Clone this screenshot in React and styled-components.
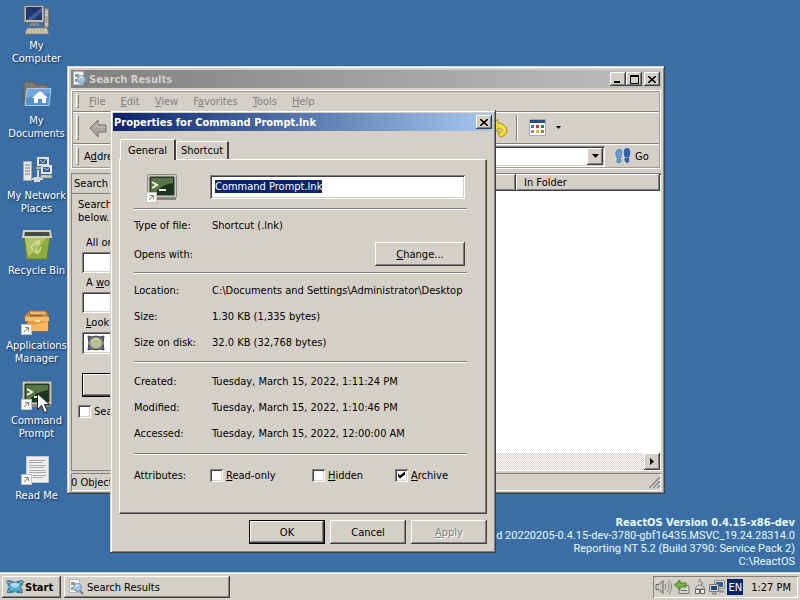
import React, { useEffect, useRef } from "react";
import styled, { createGlobalStyle, css } from "styled-components";

const face = "#d4d0c8";
const raised = css`
  box-shadow: inset -1px -1px #404040, inset 1px 1px #fff, inset -2px -2px #808080;
`;
const sunken = css`
  box-shadow: inset 1px 1px #808080, inset -1px -1px #fff, inset 2px 2px #404040, inset -2px -2px ${face};
`;

const GlobalStyle = createGlobalStyle`
  * { box-sizing: border-box; }
  body { margin: 0; overflow: hidden; }
  body, button, input {
    font-family: "DejaVu Sans Condensed", "DejaVu Sans", sans-serif;
    font-size: 11px;
    line-height: 13px;
    color: #000;
  }
  button, input { margin: 0; padding: 0; border: 0; border-radius: 0; outline: 0; }
  svg { display: block; flex: none; }
`;

const Page = styled.div`
  min-height: 100vh;
  display: flex;
  flex-direction: column;
  background: #3a6ea5;
`;
const Desktop = styled.main`
  position: relative;
  flex: 1;
  overflow: hidden;
`;
const Shortcuts = styled.nav`
  display: grid;
  grid-auto-rows: 75px;
  width: 73px;
  padding-top: 4px;
`;
const ShortcutLink = styled.a`
  display: flex;
  flex-direction: column;
  align-items: center;
  gap: 3px;
  color: #fff;
  text-align: center;
  text-decoration: none;
  text-shadow: 1px 1px 2px #102848;
`;
const ShortcutText = styled.span`
  white-space: pre;
`;
const Version = styled.div`
  position: absolute;
  right: 5px;
  bottom: 4px;
  color: #e8fbff;
  font-family: Roboto, "DejaVu Sans Condensed", sans-serif;
  text-align: right;
  white-space: nowrap;
`;
const VersionLine = styled.div``;
const VersionTitle = styled.strong`
  display: block;
  font-family: "DejaVu Sans Condensed", "DejaVu Sans", sans-serif;
`;

const WindowFrame = styled.section`
  position: absolute;
  display: flex;
  flex-direction: column;
  background: ${face};
  padding: 3px;
  box-shadow: inset -1px -1px #404040, inset 1px 1px ${face}, inset 2px 2px #fff, inset -2px -2px #808080;
`;
const SearchFrame = styled(WindowFrame)`
  left: 67px;
  right: 135px;
  top: 66px;
  bottom: 78px;
  padding: 4px 4px 3px;
`;
const DialogFrame = styled(WindowFrame)`
  left: 110px;
  top: 110px;
  width: 386px;
`;
const TitleBar = styled.header`
  flex: none;
  display: flex;
  align-items: center;
  height: 18px;
  padding: 0 1px;
  gap: 1px;
  color: ${(p) => (p.$active ? "#fff" : face)};
  background: ${(p) =>
    p.$active
      ? "linear-gradient(90deg, #0a246a, #a6caf0)"
      : "linear-gradient(90deg, #808080, #c0c0c0)"};
`;
const TitleText = styled.h1`
  flex: 1;
  margin: 0;
  font-size: 11px;
  line-height: 13px;
  white-space: nowrap;
`;
const CaptionButtons = styled.div`
  display: flex;
`;
const CaptionButton = styled.button`
  display: grid;
  place-items: center;
  width: 16px;
  height: 14px;
  margin-left: ${(p) => (p.$apart ? 2 : 0)}px;
  background: ${face};
  ${raised}
`;

const Rebar = styled.div`
  flex: none;
  margin-top: 2px;
  border: 1px solid #fff;
  outline: 1px solid #a09c94;
  outline-offset: -2px;
`;
const Band = styled.div`
  display: flex;
  align-items: center;
  height: ${(p) => p.$height}px;
  padding-left: 4px;
  border-bottom: 1px solid #808080;
  box-shadow: inset 0 1px #fff;
  &:last-child { border-bottom: 0; }
`;
const Grip = styled.span`
  flex: none;
  align-self: stretch;
  width: 3px;
  margin: 3px 0;
  border: 1px solid;
  border-color: #fff #808080 #808080 #fff;
`;
const MenuItem = styled.button`
  height: 16px;
  margin-left: ${(p) => (p.$first ? 10 : 15)}px;
  background: none;
  color: #808080;
`;
const ToolButton = styled.button`
  display: flex;
  align-items: center;
  background: none;
  gap: 10px;
`;
const BackGroup = styled.div`
  flex: none;
  width: 411px;
  padding-left: 9px;
`;
const ToolDivider = styled.span`
  width: 2px;
  height: 26px;
  margin: 0 11px 0 8px;
  border-left: 1px solid #808080;
  border-right: 1px solid #fff;
`;
const AddressLabel = styled.label`
  width: 64px;
  padding-left: 5px;
`;
const AddressBox = styled.div`
  flex: 1;
  display: flex;
  height: 21px;
  padding: 2px;
  background: #fff;
  ${sunken}
`;
const AddressInput = styled.input`
  flex: 1;
  min-width: 0;
  background: #fff;
`;
const ArrowButton = styled.button`
  display: grid;
  place-items: center;
  width: 16px;
  height: 17px;
  background: ${face};
  ${raised}
`;
const GoButton = styled.button`
  display: flex;
  align-items: center;
  gap: 4px;
  width: 55px;
  padding-left: 10px;
  background: none;
`;

const Panes = styled.div`
  flex: 1;
  display: flex;
  min-height: 0;
  margin-top: 4px;
`;
const SearchPane = styled.aside`
  width: 200px;
  border-top: 1px solid #808080;
  border-left: 1px solid #808080;
  border-bottom: 1px solid #808080;
`;
const PaneTitle = styled.h2`
  margin: 0;
  padding: 3px 2px;
  font-size: 11px;
  font-weight: normal;
  line-height: 13px;
  border-bottom: 1px solid #808080;
`;
const PaneForm = styled.form`
  padding: 4px 10px 0 6px;
`;
const PaneHint = styled.p`
  margin: 0 0 12px;
`;
const Field = styled.label`
  display: block;
  padding-left: 4px;
  margin-bottom: 3px;
`;
const FieldText = styled.span`
  display: block;
  padding-left: 4px;
  margin-bottom: 3px;
`;
const FieldInput = styled.input`
  width: 160px;
  height: 21px;
  background: #fff;
  ${sunken}
`;
const PlaceButton = styled.button`
  display: flex;
  align-items: center;
  width: 160px;
  height: 22px;
  padding-left: 5px;
  background: #fff;
  ${sunken}
`;
const PushButton = styled.button`
  width: ${(p) => p.$width || 76}px;
  height: 24px;
  background: ${face};
  ${raised}
  ${(p) =>
    p.$main &&
    css`
      border: 1px solid #000;
    `}
  &:disabled {
    color: #808080;
    text-shadow: 1px 1px #fff;
  }
`;
const SearchAction = styled.div`
  padding: 16px 0 6px 4px;
`;

const CheckLabel = styled.label`
  display: flex;
  align-items: center;
  gap: 3px;
  white-space: nowrap;
`;
const CheckBox = styled.input.attrs({ type: "checkbox" })`
  appearance: none;
  width: 13px;
  height: 13px;
  background: #fff;
  ${sunken}
  &:checked::after {
    content: "";
    display: block;
    width: 7px;
    height: 7px;
    margin: 3px;
    background: #000;
    clip-path: polygon(0 29%, 29% 57%, 100% 0, 100% 43%, 29% 100%, 0 72%);
  }
`;

const ListPane = styled.div`
  flex: 1;
  display: flex;
  flex-direction: column;
  margin-left: 4px;
  padding: 1px;
  background: #fff;
  box-shadow: inset 0 1px #808080, inset 0 2px #404040;
`;
const ListTable = styled.table`
  width: 100%;
  table-layout: fixed;
  border-collapse: collapse;
`;
const ListHead = styled.th`
  width: ${(p) => p.$width || "auto"};
  height: 17px;
  padding: 0 8px;
  font-weight: normal;
  text-align: left;
  background: ${face};
  box-shadow: inset -1px -1px #404040, inset 1px 1px #fff, inset -2px -2px #808080;
`;
const Scroll = styled.div`
  display: flex;
  justify-content: flex-end;
  margin-top: auto;
  background: repeating-conic-gradient(#fff 0 25%, ${face} 0 50%) 0 0 / 2px 2px;
`;
const StatusBar = styled.footer`
  flex: none;
  display: flex;
  align-items: center;
  justify-content: space-between;
  height: 18px;
  margin-top: 2px;
  box-shadow: inset 1px 1px #808080, inset -1px -1px #fff;
`;

const DialogBody = styled.div`
  padding: 8px 6px 6px;
`;
const TabList = styled.div`
  display: flex;
  align-items: flex-end;
  padding-left: 1px;
`;
const Tab = styled.button`
  position: relative;
  height: ${(p) => (p.$on ? 21 : 18)}px;
  width: ${(p) => (p.$on ? 56 : 53)}px;
  margin-bottom: ${(p) => (p.$on ? -1 : 0)}px;
  z-index: ${(p) => (p.$on ? 1 : 0)};
  background: ${face};
  border: 1px solid #fff;
  border-right: 2px solid #404040;
  border-bottom: 0;
  border-radius: 2px 2px 0 0;
`;
const TabPanel = styled.div`
  padding: 0 19px 25px 14px;
  border: 1px solid;
  border-color: #fff #404040 #404040 #fff;
  box-shadow: inset -1px -1px #808080;
`;
const NameRow = styled.div`
  display: flex;
  align-items: center;
  height: 48px;
  padding: 8px 2px 0 12px;
  gap: 32px;
`;
const NameInput = styled.input`
  flex: 1;
  height: 24px;
  margin-bottom: 2px;
  padding: 2px 5px 4px;
  background: #fff;
  ${sunken}
  &::selection { background: #0a246a; color: #fff; }
`;
const Group = styled.div`
  padding: ${(p) => p.$top}px 0 ${(p) => p.$bottom}px;
  border-top: 1px solid #808080;
  box-shadow: inset 0 1px #fff;
`;
const Row = styled.div`
  display: flex;
  align-items: center;
  height: ${(p) => p.$height || 26}px;
  padding-right: 2px;
`;
const RowLabel = styled.span`
  flex: none;
  width: ${(p) => (p.$narrow ? 76 : 78)}px;
`;
const RowValue = styled.span`
  flex: 1;
  white-space: nowrap;
`;
const Attribute = styled.div`
  width: ${(p) => p.$width}px;
`;
const DialogButtons = styled.div`
  display: flex;
  justify-content: flex-end;
  gap: 5px;
  padding-top: 6px;
`;

const TaskBar = styled.footer`
  flex: none;
  display: flex;
  align-items: center;
  gap: 3px;
  height: 28px;
  padding: 2px 2px 0;
  background: ${face};
  box-shadow: inset 0 1px ${face}, inset 0 2px #fff;
`;
const StartButton = styled.button`
  display: flex;
  align-items: center;
  width: 59px;
  height: 22px;
  padding-left: 3px;
  font-weight: bold;
  background: ${face};
  ${raised}
`;
const TaskButton = styled.button`
  display: flex;
  align-items: center;
  gap: 3px;
  width: 166px;
  height: 22px;
  padding-left: 4px;
  background: ${face};
  ${raised}
`;
const Tray = styled.div`
  display: flex;
  align-items: center;
  gap: 2px;
  height: 22px;
  margin-left: auto;
  padding: 0 7px 0 2px;
  box-shadow: inset 1px 1px #808080, inset -1px -1px #fff;
`;
const Language = styled.span`
  padding: 2px 1px 1px;
  color: #fff;
  background: #0a246a;
`;
const Clock = styled.time`
  padding-left: 6px;
  white-space: nowrap;
`;
const Pointer = styled.svg`
  position: absolute;
  left: 37px;
  top: 393px;
`;

const LinkBadge = () => (
  <g>
    <rect x="0.500" y="20.500" width="10" height="10" fill="#f6f6f4" stroke="#c4c4bc" />
    <path d="M3 28 7 24M4 23.500H7.500V27" fill="none" stroke="#84847c" />
  </g>
);
const ComputerIcon = () => (
  <svg width="32" height="32" viewBox="0 0 32 32">
    <path d="M23 4h5v20h-5z" fill="#aaa9a4" stroke="#535b5d" />
    <path d="M24 8h3M24 11h3M24 20h3" stroke="#e7e3db" />
    <rect x="3" y="1.500" width="20" height="17" rx="1" fill="#bebdb8" stroke="#656b6e" />
    <rect x="5" y="3" width="16" height="13" fill="#1f356c" />
    <path d="M5 16 21 3v5L12 16z" fill="#405a91" />
    <path d="M10 19h7l2 3H8z" fill="#86898a" />
    <path d="M6 24h20l2 6H4z" fill="#e4d6bf" stroke="#77736c" />
    <path d="M7 26h18M6 28h20" stroke="#928977" strokeDasharray="2 1" />
  </svg>
);
const DocumentsIcon = () => (
  <svg width="32" height="32" viewBox="0 0 32 32">
    <path d="M3 26V5q0-2 2-2h8l2 3h12v18z" fill="#837a70" stroke="#625b54" />
    <path d="M6 9.500h24l-2 17H4z" fill="#74a6de" stroke="#a3caf2" />
    <path d="M5 19 29 14l-2 12H5z" fill="#5590d2" />
    <path d="m19 12-8 7h2v5h4v-4h4v4h4v-5h2z" fill="#fff" />
  </svg>
);
const NetworkIcon = () => (
  <svg width="32" height="32" viewBox="0 0 32 32">
    <rect x="2.500" y="7.500" width="8" height="19" fill="#e7e7e5" stroke="#a4a7a7" />
    <path d="M4 11h5M4 14h5M4 17h5M4 20h5" stroke="#777" />
    <path d="M11 25h6v-9M17 25h5" fill="none" stroke="#dadcdc" strokeWidth="2" />
    <path d="M13 23h6v5h-6z" fill="#d8d8d4" />
    <g stroke="#e2e6e8" strokeWidth="2">
      <rect x="17" y="4" width="10" height="7" fill="#365d8c" />
      <rect x="21" y="12" width="9" height="7" fill="#365d8c" />
    </g>
    <path d="m19 6 3 3 3-4M23 14l3 2 3-3" fill="none" stroke="#c4d2df" />
    <path d="M15 13h5v2h-5zM20 21h11v3H19z" fill="#c9cac6" stroke="#81827e" strokeWidth=".5" />
  </svg>
);
const RecycleIcon = () => (
  <svg width="32" height="32" viewBox="0 0 32 32">
    <path d="M3 7h26l-3 23H6z" fill="#8fac3d" stroke="#658027" />
    <path d="m4 9 3 18q9-5 18-18z" fill="#b9c970" opacity=".8" />
    <path d="M3 2h26l1 6H2z" fill="#455044" stroke="#ced2be" strokeWidth="2" />
    <path d="M5 4h22v3H5z" fill="#424c40" />
    <path d="m13 14 3-2 3 3M20 18l-2 5h-4M12 22l-2-4 3-3M18 11v4h-4M17 20l-3 3 3 2" fill="none" stroke="#d2dd98" strokeWidth="1.500" />
  </svg>
);
const BoxIcon = () => (
  <svg width="32" height="32" viewBox="0 0 32 32">
    <path d="M6 12h21v15H6z" fill="#e89b3e" stroke="#ad6b23" />
    <path d="m6 11 2-4h17l3 4zM4 12l4-5 2 6H3M24 7l4 6h-7" fill="#edb66c" stroke="#9f652b" />
    <path d="M4 13h24v4H4z" fill="#f5bd70" />
    <path d="M7 21q10 0 20-4v10H7z" fill="#f4b65f" />
    <path d="M14 16h5v2h-5z" fill="#ffdfa8" />
    <LinkBadge />
  </svg>
);
const TerminalIcon = () => (
  <svg width="32" height="32" viewBox="0 0 32 32">
    <rect x="1.500" y="2.500" width="29" height="23" rx="1" fill="#cac9c2" stroke="#8b8b82" />
    <path d="M10 26h20v2H10z" fill="#85837a" />
    <path d="M4 5h24v18H4z" fill="#1b3420" stroke="#303b2e" />
    <path d="M5 6h22v5Q14 13 8 22H5z" fill="#587345" />
    <path d="m6 10 5 3-5 3M13 18h7" fill="none" stroke="#eef4dc" strokeWidth="2" />
    <LinkBadge />
  </svg>
);
const ReadmeIcon = () => (
  <svg width="32" height="32" viewBox="0 0 32 32">
    <path d="M5.500 2.500h22v26h-22z" fill="#eee" stroke="#c8c8c8" />
    <path d="M8 6.500h17M8 8.500h14M8 11.500h17M8 13.500h15M8 16.500h16M8 18.500h17M12 21.500h13M12 23.500h10" stroke="#aaa" />
    <LinkBadge />
  </svg>
);
const SearchIcon = () => (
  <svg width="16" height="16" viewBox="0 0 16 16">
    <path d="M1.500.500h10v13h-10z" fill="#f4f4f2" stroke="#b4b6b7" />
    <path d="M3 3h4v3H3zM3 8h2v3H3" fill="#8d99a5" />
    <path d="m12 12 3 3" stroke="#727a83" strokeWidth="2" />
    <circle cx="9.500" cy="8.500" r="4" fill="#a1c5e4" stroke="#7692ac" />
    <path d="M7 8q1-3 4-2" fill="none" stroke="#fff" />
  </svg>
);
const BackIcon = () => (
  <svg width="20" height="20" viewBox="0 0 20 20">
    <path d="M2 10 10 2v5h8v7h-8v5z" fill="#a6a49f" stroke="#77756f" />
    <path d="m5 10 4-4v3h8" fill="none" stroke="#c4c2bc" />
  </svg>
);
const UndoIcon = () => (
  <svg width="18" height="20" viewBox="0 0 18 20">
    <path d="M1 8 8 1v4q9 1 9 8-1 5-7 6l-2-4q5-1 4-3-1-2-4-2v4z" fill="#f2d631" stroke="#ad951c" />
    <path d="M8 7q6 0 7 6" fill="none" stroke="#fff27d" />
  </svg>
);
const ViewsIcon = () => (
  <svg width="17" height="17" viewBox="0 0 17 17">
    <path d="M.500.500h16v16H.500z" fill="#fff" stroke="#aaa" />
    <path d="M1 1h15v3H1z" fill="#244c93" />
    <path d="M2 6h3v3H2z" fill="#3675c5" />
    <path d="M7 6h3v3H7z" fill="#d23127" />
    <path d="M12 6h3v3h-3z" fill="#258656" />
    <path d="M2 11h3v3H2z" fill="#a474b1" />
    <path d="M7 11h3v3H7z" fill="#e2bf20" />
    <path d="M12 11h3v3h-3z" fill="#a27754" />
  </svg>
);
const GoIcon = () => (
  <svg width="16" height="16" viewBox="0 0 16 16">
    <path d="M2 2q4-3 5 2L6 10H2Q-1 5 2 2M2 11h4v2q-1 3-3 2-2 0-1-4" fill="#649bd0" stroke="#42749f" strokeWidth=".5" />
    <path d="M10 1q4-3 5 3 0 3-1 5h-4Q8 3 10 1M10 10h4v3q-1 3-3 1-2-1-1-4" fill="#2a61b0" stroke="#244f89" strokeWidth=".5" />
  </svg>
);
const Down = ({ small }) => (
  <svg width={small ? 5 : 7} height={small ? 3 : 4} viewBox="0 0 7 4"><path d="M0 0h7L3.500 4z" /></svg>
);
const RightArrow = () => (
  <svg width="4" height="7" viewBox="0 0 4 7"><path d="M0 0v7l4-3.500z" /></svg>
);
const Cross = () => (
  <svg width="8" height="7" viewBox="0 0 8 7"><path d="m0 0 8 7M8 0 0 7" stroke="#000" strokeWidth="1.600" /></svg>
);
const Minimize = () => (
  <svg width="9" height="8" viewBox="0 0 9 8"><path d="M0 7h6" stroke="#000" strokeWidth="2" /></svg>
);
const Maximize = () => (
  <svg width="9" height="9" viewBox="0 0 9 9"><path d="M.500 1v7.500h8V1M0 1h9" fill="none" stroke="#000" /><path d="M0 0h9v2H0z" /></svg>
);
const DriveIcon = () => (
  <svg width="18" height="16" viewBox="0 0 18 16">
    <path d="M1 1q4 2 8 0 4 2 8 0-2 7 0 14-4-2-8 0-4-2-8 0Q3 8 1 1" fill="#626483" stroke="#38394f" />
    <ellipse cx="9" cy="8" rx="6.500" ry="6" fill="#b8bd94" stroke="#6f7564" />
    <path d="M5 6q3-4 7-1" fill="none" stroke="#dde0be" />
  </svg>
);
const ReactIcon = () => (
  <svg width="20" height="16" viewBox="0 0 20 16">
    <path d="M1 2q3-2 9 1 6-3 9-1-1 4-3 6 2 3 2 6-4 1-8-1-5 2-8 1 0-4 2-6Q2 5 1 2" fill="#3b7897" />
    <ellipse cx="10" cy="8" rx="6" ry="5" fill="#4fa5c8" />
    <path d="M5 6q4-4 10 0l-5 3z" fill="#c3e8f2" />
    <path d="M2 3q4 0 9 5 4 3 6 5M18 3q-4 0-9 5-4 3-6 5" fill="none" stroke="#90cce2" />
  </svg>
);
const SizeGrip = () => (
  <svg width="14" height="14" viewBox="0 0 14 14">
    <path d="M1 13 13 1M5 13l8-8M9 13l4-4" stroke="#fff" />
    <path d="M2 13 13 2M6 13l7-7M10 13l3-3" stroke="#808080" strokeWidth="1.500" />
  </svg>
);
const VolumeIcon = () => (
  <svg width="17" height="16" viewBox="0 0 17 16">
    <path d="M1 5.500h3l4-4v13l-4-4H1z" fill="#c7c7c2" stroke="#64645f" />
    <path d="M10 5q2 3 0 6M12 3q4 5 0 10M14 1q5 7 0 14" fill="none" stroke="#848781" />
  </svg>
);
const EjectIcon = () => (
  <svg width="17" height="16" viewBox="0 0 17 16">
    <path d="M5 6.500h10v8H5z" fill="#d5d5cf" stroke="#797973" />
    <path d="M7 11.500h6" stroke="#656565" />
    <path d="M.500 6 6 1v3h6v4H6v3z" fill="#77b53a" stroke="#477b20" />
  </svg>
);
const PlugIcon = () => (
  <svg width="14" height="16" viewBox="0 0 14 16">
    <path d="M7 7Q11 4 8 3 4 2 8 0" fill="none" stroke="#969690" strokeWidth="1.500" />
    <path d="M2 10q1-4 5-4 4 1 5 4z" fill="#deded8" stroke="#797973" />
    <path d="M2.500 10.500h4v4h-4zM7.500 10.500h4v4h-4z" fill="#eee" stroke="#65655f" />
  </svg>
);
const LanIcon = () => (
  <svg width="16" height="16" viewBox="0 0 16 16">
    <path d="M5.500 1.500h10v8h-10z" fill="#dadbd5" stroke="#8b908e" />
    <path d="M7 3h7v5H7z" fill="#3b5e92" />
    <path d="M.500 5.500h9v7h-9z" fill="#d1d5d4" stroke="#737b7e" />
    <path d="M2 7h6v4H2z" fill="#28497e" />
    <path d="M3 14.500h5M10 12.500h5" stroke="#858883" strokeWidth="2" />
  </svg>
);

const shortcuts = [
  ["My\nComputer", ComputerIcon],
  ["My\nDocuments", DocumentsIcon],
  ["My Network\nPlaces", NetworkIcon],
  ["Recycle Bin", RecycleIcon],
  ["Applications\nManager", BoxIcon],
  ["Command\nPrompt", TerminalIcon],
  ["Read Me", ReadmeIcon],
];

function SearchWindow() {
  return (
    <SearchFrame>
      <TitleBar>
        <SearchIcon />
        <TitleText>Search Results</TitleText>
        <CaptionButtons>
          <CaptionButton aria-label="Minimize"><Minimize /></CaptionButton>
          <CaptionButton aria-label="Maximize"><Maximize /></CaptionButton>
          <CaptionButton aria-label="Close" $apart><Cross /></CaptionButton>
        </CaptionButtons>
      </TitleBar>
      <Rebar>
        <Band $height={21}>
          <Grip />
          <MenuItem $first><u>F</u>ile</MenuItem>
          <MenuItem><u>E</u>dit</MenuItem>
          <MenuItem><u>V</u>iew</MenuItem>
          <MenuItem>F<u>a</u>vorites</MenuItem>
          <MenuItem><u>T</u>ools</MenuItem>
          <MenuItem><u>H</u>elp</MenuItem>
        </Band>
        <Band $height={32}>
          <Grip />
          <BackGroup><ToolButton aria-label="Back"><BackIcon /></ToolButton></BackGroup>
          <ToolButton aria-label="Undo"><UndoIcon /></ToolButton>
          <ToolDivider />
          <ToolButton aria-label="Views"><ViewsIcon /><Down small /></ToolButton>
        </Band>
        <Band $height={24}>
          <Grip />
          <AddressLabel htmlFor="address">A<u>d</u>dress</AddressLabel>
          <AddressBox>
            <AddressInput id="address" />
            <ArrowButton aria-label="Show addresses"><Down /></ArrowButton>
          </AddressBox>
          <GoButton><GoIcon />Go</GoButton>
        </Band>
      </Rebar>
      <Panes>
        <SearchPane>
          <PaneTitle>Search</PaneTitle>
          <PaneForm>
            <PaneHint>Search<br />below.</PaneHint>
            <Field><FieldText>All or</FieldText><FieldInput /></Field>
            <Field><FieldText>A <u>w</u>ord</FieldText><FieldInput /></Field>
            <Field as="div"><FieldText><u>L</u>ook</FieldText><PlaceButton type="button" aria-label="Look in"><DriveIcon /></PlaceButton></Field>
            <SearchAction><PushButton type="button" $main aria-label="Search" /></SearchAction>
            <CheckLabel><CheckBox />Search</CheckLabel>
          </PaneForm>
        </SearchPane>
        <ListPane>
          <ListTable>
            <thead><tr><ListHead $width="240px" aria-label="Name" /><ListHead>In Folder</ListHead></tr></thead>
          </ListTable>
          <Scroll><ArrowButton aria-label="Scroll right"><RightArrow /></ArrowButton></Scroll>
        </ListPane>
      </Panes>
      <StatusBar>0 Objects<SizeGrip /></StatusBar>
    </SearchFrame>
  );
}

const details = [
  {
    top: 4,
    bottom: 6,
    rows: [
      ["Location:", "C:\\Documents and Settings\\Administrator\\Desktop"],
      ["Size:", "1.30 KB (1,335 bytes)"],
      ["Size on disk:", "32.0 KB (32,768 bytes)"],
    ],
  },
  {
    top: 6,
    bottom: 7,
    rows: [
      ["Created:", "Tuesday, March 15, 2022, 1:11:24 PM"],
      ["Modified:", "Tuesday, March 15, 2022, 1:10:46 PM"],
      ["Accessed:", "Tuesday, March 15, 2022, 12:00:00 AM"],
    ],
  },
];

function PropertiesDialog() {
  const nameRef = useRef(null);
  useEffect(() => {
    nameRef.current.focus();
    nameRef.current.select();
  }, []);
  return (
    <DialogFrame role="dialog">
      <TitleBar $active>
        <TitleText>Properties for Command Prompt.lnk</TitleText>
        <CaptionButton aria-label="Close"><Cross /></CaptionButton>
      </TitleBar>
      <DialogBody>
        <TabList role="tablist">
          <Tab role="tab" aria-selected="true" $on>General</Tab>
          <Tab role="tab" aria-selected="false">Shortcut</Tab>
        </TabList>
        <TabPanel role="tabpanel">
          <NameRow>
            <TerminalIcon />
            <NameInput ref={nameRef} aria-label="Name" defaultValue="Command Prompt.lnk" />
          </NameRow>
          <Group $top={1} $bottom={4}>
            <Row $height={30}><RowLabel>Type of file:</RowLabel><RowValue>Shortcut (.lnk)</RowValue></Row>
            <Row $height={28}>
              <RowLabel>Opens with:</RowLabel><RowValue />
              <PushButton $width={90}><u>C</u>hange...</PushButton>
            </Row>
          </Group>
          {details.map(({ top, bottom, rows }) => (
            <Group key={rows[0][0]} $top={top} $bottom={bottom}>
              {rows.map(([label, value]) => (
                <Row key={label}><RowLabel>{label}</RowLabel><RowValue>{value}</RowValue></Row>
              ))}
            </Group>
          ))}
          <Group $top={8} $bottom={0}>
            <Row>
              <RowLabel $narrow>Attributes:</RowLabel>
              <Attribute $width={102}><CheckLabel><CheckBox /><span><u>R</u>ead-only</span></CheckLabel></Attribute>
              <Attribute $width={83}><CheckLabel><CheckBox /><span><u>H</u>idden</span></CheckLabel></Attribute>
              <CheckLabel><CheckBox defaultChecked /><span><u>A</u>rchive</span></CheckLabel>
            </Row>
          </Group>
        </TabPanel>
        <DialogButtons>
          <PushButton $main>OK</PushButton>
          <PushButton>Cancel</PushButton>
          <PushButton disabled><u>A</u>pply</PushButton>
        </DialogButtons>
      </DialogBody>
    </DialogFrame>
  );
}

export default function App() {
  return (
    <Page>
      <GlobalStyle />
      <Desktop>
        <Shortcuts>
          {shortcuts.map(([label, Icon]) => (
            <ShortcutLink href="#" key={label}><Icon /><ShortcutText>{label}</ShortcutText></ShortcutLink>
          ))}
        </Shortcuts>
        <Version>
          <VersionTitle>ReactOS Version 0.4.15-x86-dev</VersionTitle>
          <VersionLine>Build 20220205-0.4.15-dev-3780-gbf16435.MSVC_19.24.28314.0</VersionLine>
          <VersionLine>Reporting NT 5.2 (Build 3790: Service Pack 2)</VersionLine>
          <VersionLine>C:\ReactOS</VersionLine>
        </Version>
        <SearchWindow />
        <PropertiesDialog />
        <Pointer width="13" height="21" viewBox="0 0 13 21">
          <path d="M.500.500v16l4-4 3 7 3-1-3-7h5z" fill="#fff" stroke="#222" />
        </Pointer>
      </Desktop>
      <TaskBar>
        <StartButton><ReactIcon />Start</StartButton>
        <TaskButton><SearchIcon />Search Results</TaskButton>
        <Tray>
          <VolumeIcon /><EjectIcon /><PlugIcon /><LanIcon />
          <Language>EN</Language>
          <Clock>1:27 PM</Clock>
        </Tray>
      </TaskBar>
    </Page>
  );
}
